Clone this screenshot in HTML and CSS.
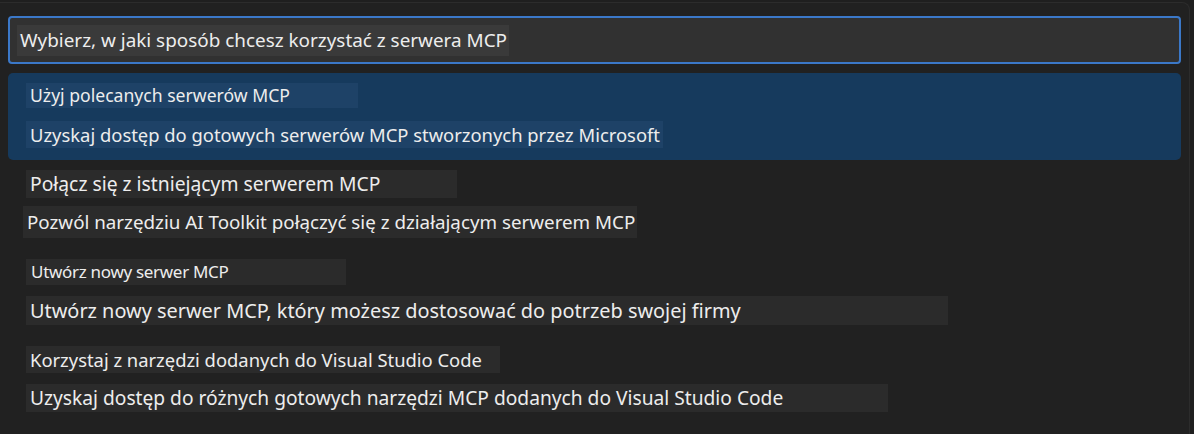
FILE: index.html
```html
<!DOCTYPE html>
<html lang="pl">

<head>
    <meta charset="UTF-8">
    <meta name="viewport" content="width=device-width, initial-scale=1.0">
    <title>MCP</title>
    <link rel="stylesheet" href="styles.css">
</head>

<body>
    <div class="quick-pick">
        <!-- Input / title -->
        <div class="qp-input">
            <span class="label lbl-title">Wybierz, w jaki sposób chcesz korzystać z serwera MCP</span>
        </div>

        <!-- Options -->
        <div class="qp-list">
            <div class="qp-item selected item-1">
                <span class="label lbl-1a">Użyj polecanych serwerów MCP</span>
                <span class="label lbl-1b">Uzyskaj dostęp do gotowych serwerów MCP stworzonych przez Microsoft</span>
            </div>
            <div class="qp-item item-2">
                <span class="label lbl-2a">Połącz się z istniejącym serwerem MCP</span>
                <span class="label lbl-2b">Pozwól narzędziu AI Toolkit połączyć się z działającym serwerem MCP</span>
            </div>
            <div class="qp-item item-3">
                <span class="label lbl-3a">Utwórz nowy serwer MCP</span>
                <span class="label lbl-3b">Utwórz nowy serwer MCP, który możesz dostosować do potrzeb swojej firmy</span>
            </div>
            <div class="qp-item item-4">
                <span class="label lbl-4a">Korzystaj z narzędzi dodanych do Visual Studio Code</span>
                <span class="label lbl-4b">Uzyskaj dostęp do różnych gotowych narzędzi MCP dodanych do Visual Studio Code</span>
            </div>
        </div>
    </div>
</body>

</html>
```

FILE: styles.css
```css
body {
    font-family: 'Noto Sans', 'Open Sans', sans-serif;
    margin: 0;
    padding: 0;
    background-color: #1f1f1f;
    color: #ededed;
    overflow: hidden;
}

/* Quick pick panel */
.quick-pick {
    width: 1190px;
    height: 440px;
    box-sizing: border-box;
    margin-top: 2px;
    padding: 13px 8px 0 8px;
    background-color: #212121;
    border-top: 1px solid #2c2c2c;
    border-right: 1px solid #2c2c2c;
    border-top-right-radius: 8px;
}

.qp-input {
    height: 48px;
    box-sizing: border-box;
    border: 2px solid #3b78c8;
    border-radius: 4px;
    background-color: #313131;
    padding: 7px 7px;
    display: flex;
    align-items: flex-start;
}

.label {
    display: block;
    box-sizing: border-box;
    padding-left: 4px;
    background-color: #2b2b2b;
    white-space: nowrap;
}

.lbl-title {
    background-color: #3a3a3a;
    width: 492px;
    height: 31px;
    line-height: 31px;
    font-size: 18.9px;
    padding-left: 3px;
}

.qp-list {
    margin-top: 9px;
}

.qp-item {
    height: 87px;
    box-sizing: border-box;
    padding-left: 18px;
}

.qp-item.selected {
    background-color: #163a5d;
    border-radius: 5px;
}

.qp-item.selected .label {
    background-color: #1e4267;
}

/* Option 1 */
.item-1 { padding-top: 10px; }
.lbl-1a { width: 332px; height: 25px; line-height: 25px; font-size: 17.6px; }
.lbl-1b { width: 637px; height: 27px; line-height: 27px; font-size: 18.4px; margin-top: 13px; }

/* Option 2 */
.item-2 { padding-top: 10px; }
.lbl-2a { width: 431px; height: 28px; line-height: 28px; font-size: 19.3px; }
.lbl-2b { width: 614px; height: 32px; line-height: 32px; font-size: 18.8px; margin-top: 8px; margin-left: -3px; }

/* Option 3 */
.item-3 { padding-top: 12px; }
.lbl-3a { width: 320px; height: 26px; line-height: 26px; font-size: 17px; letter-spacing: -0.3px; padding-left: 5px; }
.lbl-3b { width: 922px; height: 29px; line-height: 29px; font-size: 19.9px; margin-top: 11px; }

/* Option 4 */
.item-4 { padding-top: 12px; }
.lbl-4a { width: 474px; height: 27px; line-height: 27px; font-size: 18.4px; }
.lbl-4b { width: 862px; height: 28px; line-height: 28px; font-size: 19.2px; margin-top: 11px; }
```
